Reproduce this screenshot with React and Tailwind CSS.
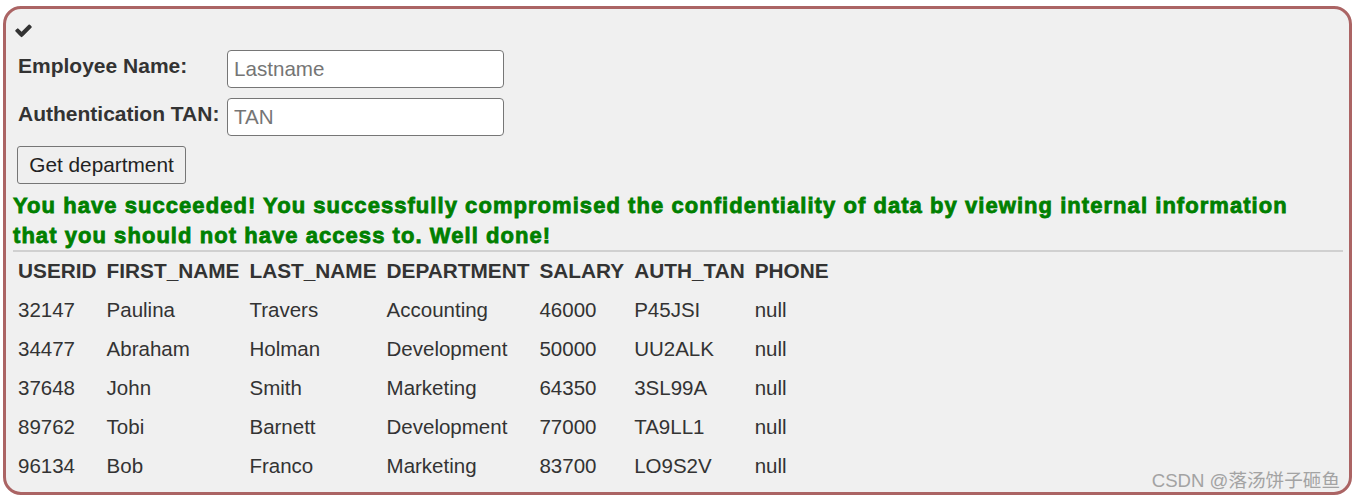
import { useState } from "react";

const rows = [
  ["32147", "Paulina", "Travers", "Accounting", "46000", "P45JSI", "null"],
  ["34477", "Abraham", "Holman", "Development", "50000", "UU2ALK", "null"],
  ["37648", "John", "Smith", "Marketing", "64350", "3SL99A", "null"],
  ["89762", "Tobi", "Barnett", "Development", "77000", "TA9LL1", "null"],
  ["96134", "Bob", "Franco", "Marketing", "83700", "LO9S2V", "null"],
];

const columns = ["USERID", "FIRST_NAME", "LAST_NAME", "DEPARTMENT", "SALARY", "AUTH_TAN", "PHONE"];

export default function App() {
  const [name, setName] = useState("");
  const [tan, setTan] = useState("");

  return (
    <div className="relative w-[1358px] h-[500px] bg-white pt-[6px] pl-[3px] font-['Liberation_Sans',Arial,sans-serif]">
      <div className="w-[1349px] h-[489px] border-[3px] border-[#ab6464] rounded-[18px] bg-[#f0f0f0] overflow-hidden">
        {/* check icon */}
        <div className="mt-[13px] ml-[8px] h-[15px]">
          <svg viewBox="0 0 1792 1500" className="w-[19px] h-[16px] fill-[#333]">
            <path d="M1671 466q0 40-28 68l-724 724-136 136q-28 28-68 28t-68-28l-136-136-362-362q-28-28-28-68t28-68l136-136q28-28 68-28t68 28l294 295 656-657q28-28 68-28t68 28l136 136q28 28 28 68z" />
          </svg>
        </div>

        {/* form */}
        <div className="mt-[13px] ml-[12px] flex flex-col gap-[10px]">
          <div className="flex items-start">
            <label className="w-[209px] pt-[4px] text-[21px] leading-[24px] font-bold text-[#333]">Employee Name:</label>
            <input
              value={name}
              onChange={(e) => setName(e.target.value)}
              placeholder="Lastname"
              className="w-[277px] h-[38px] bg-white border border-[#767676] rounded-[4px] px-[6px] text-[20.6px] text-[#333] placeholder:text-[#757575] outline-none"
            />
          </div>
          <div className="flex items-start">
            <label className="w-[209px] pt-[4px] text-[21px] leading-[24px] font-bold text-[#333]">Authentication TAN:</label>
            <input
              value={tan}
              onChange={(e) => setTan(e.target.value)}
              placeholder="TAN"
              className="w-[277px] h-[38px] bg-white border border-[#767676] rounded-[4px] px-[6px] text-[20.6px] text-[#333] placeholder:text-[#757575] outline-none"
            />
          </div>
        </div>

        <button className="mt-[10px] ml-[11px] w-[169px] h-[38px] bg-[#efefef] border border-[#767676] rounded-[3px] text-[20.8px] text-[#222]">
          Get department
        </button>

        {/* feedback */}
        <div className="mt-[7px] ml-[7px] mr-[40px] text-[22px] leading-[30px] font-bold text-[#008000] tracking-[1.05px] [-webkit-text-stroke:0.8px_#008000]">
          You have succeeded! You successfully compromised the confidentiality of data by viewing internal information that you should not have access to. Well done!
        </div>
        <div className="-mt-[1px] ml-[7px] mr-[6px] border-t-2 border-[#d0d0d0]" />

        {/* results */}
        <table className="ml-[7px] text-[#333] border-collapse">
          <thead>
            <tr className="h-[39px]">
              {columns.map((c) => (
                <th key={c} className="px-[5px] pb-[2px] text-left text-[20.8px] font-bold">{c}</th>
              ))}
            </tr>
          </thead>
          <tbody>
            {rows.map((r) => (
              <tr key={r[0]} className="h-[39px]">
                {r.map((v, i) => (
                  <td key={i} className="px-[5px] text-[20.5px]">{v}</td>
                ))}
              </tr>
            ))}
          </tbody>
        </table>
      </div>

      {/* watermark */}
      <div className="absolute right-[18px] top-[470px] text-[18.6px] leading-[22px] text-[#a3a3a3] font-['Liberation_Sans','Noto_Sans_CJK_SC',sans-serif]">
        CSDN @落汤饼子砸鱼
      </div>
    </div>
  );
}
